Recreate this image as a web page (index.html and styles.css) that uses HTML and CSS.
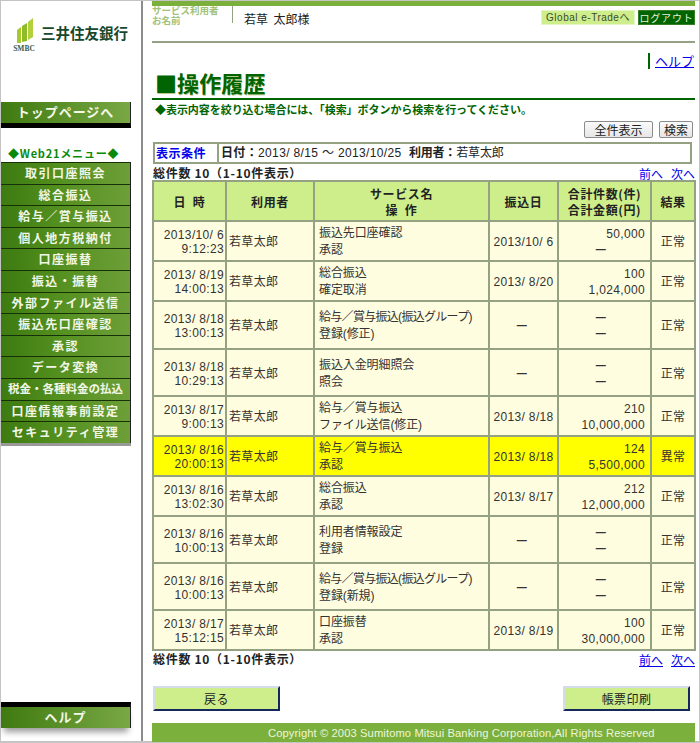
FILE: index.html
```html
<!DOCTYPE html>
<html lang="ja">
<head>
<meta charset="utf-8">
<title>操作履歴</title>
<link rel="stylesheet" href="styles.css">
</head>
<body>
<div class="frame">
  <aside class="side">
    <div class="logo">
      <div class="mark">
        <svg class="mark-svg" width="18" height="25" viewBox="0 0 18 25">
          <polygon points="1,12 5,9 5,25 1,25" fill="#a6c92e"/>
          <polygon points="6,8 11,5 11,23 6,24" fill="#8ebb28"/>
          <polygon points="12,4 17,0 17,19 12,22" fill="#b2d03a"/>
        </svg>
        <span class="smbc">SMBC</span>
      </div>
      <span class="bank">三井住友銀行</span>
    </div>
    <a class="top-btn">トップページへ</a>
    <div class="menu-title">◆Web21メニュー◆</div>
    <nav class="menu">
      <a>取引口座照会</a>
      <a>総合振込</a>
      <a>給与／賞与振込</a>
      <a>個人地方税納付</a>
      <a>口座振替</a>
      <a>振込・振替</a>
      <a>外部ファイル送信</a>
      <a>振込先口座確認</a>
      <a>承認</a>
      <a>データ変換</a>
      <a class="tight">税金・各種料金の払込</a>
      <a>口座情報事前設定</a>
      <a>セキュリティ管理</a>
    </nav>
    <div class="side-space"></div>
    <a class="help-btn">ヘルプ</a>
  </aside>
  <main class="main">
    <header class="head">
      <div class="who"><span>サービス利用者</span><span>お名前</span></div>
      <div class="name">若草&nbsp; 太郎様</div>
      <div class="head-btns"><a class="global">Global e-Tradeへ</a><a class="logout">ログアウト</a></div>
    </header>
    <div class="help-row"><a class="help-link">ヘルプ</a></div>
    <h1 class="title">■操作履歴</h1>
    <p class="note">◆表示内容を絞り込む場合には、「検索」ボタンから検索を行ってください。</p>
    <div class="tools"><button class="gray wide">全件表示</button><button class="gray">検索</button></div>
    <div class="cond">
      <div class="cond-label">表示条件</div>
      <div class="cond-body"><b>日付：</b>2013/ 8/15 ～ 2013/10/25 &nbsp;<b class="cond-user">利用者：</b><span class="cond-name">若草太郎</span></div>
    </div>
    <div class="count-row"><b>総件数 10（1-10件表示）</b><span class="pager"><a>前へ</a><a>次へ</a></span></div>
    <table class="log">
      <colgroup><col class="c1"><col class="c2"><col class="c3"><col class="c4"><col class="c5"><col class="c6"></colgroup>
      <thead>
        <tr><th>日 &nbsp;時</th><th>利用者</th><th>サービス名<br>操 &nbsp;作</th><th>振込日</th><th>合計件数(件)<br>合計金額(円)</th><th>結果</th></tr>
      </thead>
      <tbody>
        <tr class="h40"><td class="r date">2013/10/ 6<br>9:12:23</td><td class="u">若草太郎</td><td class="svc">振込先口座確認<br>承認</td><td class="c">2013/10/ 6</td><td class="r amt">50,000<span class="dash">—</span></td><td class="c">正常</td></tr>
        <tr class="h40"><td class="r date">2013/ 8/19<br>14:00:13</td><td class="u">若草太郎</td><td class="svc">総合振込<br>確定取消</td><td class="c">2013/ 8/20</td><td class="r amt">100<br>1,024,000</td><td class="c">正常</td></tr>
        <tr class="h48"><td class="r date">2013/ 8/18<br>13:00:13</td><td class="u">若草太郎</td><td class="svc"><span class="kana">給与／賞与振込(振込グループ)</span><br>登録(修正)</td><td class="c"><span class="dash">—</span></td><td class="r amt"><span class="dash">—</span><span class="dash">—</span></td><td class="c">正常</td></tr>
        <tr class="h47"><td class="r date">2013/ 8/18<br>10:29:13</td><td class="u">若草太郎</td><td class="svc">振込入金明細照会<br>照会</td><td class="c"><span class="dash">—</span></td><td class="r amt"><span class="dash">—</span><span class="dash">—</span></td><td class="c">正常</td></tr>
        <tr class="h40"><td class="r date">2013/ 8/17<br>9:00:13</td><td class="u">若草太郎</td><td class="svc">給与／賞与振込<br>ファイル送信(修正)</td><td class="c">2013/ 8/18</td><td class="r amt">210<br>10,000,000</td><td class="c">正常</td></tr>
        <tr class="h40 alert"><td class="r date">2013/ 8/16<br>20:00:13</td><td class="u">若草太郎</td><td class="svc">給与／賞与振込<br>承認</td><td class="c">2013/ 8/18</td><td class="r amt">124<br>5,500,000</td><td class="c">異常</td></tr>
        <tr class="h40"><td class="r date">2013/ 8/16<br>13:02:30</td><td class="u">若草太郎</td><td class="svc">総合振込<br>承認</td><td class="c">2013/ 8/17</td><td class="r amt">212<br>12,000,000</td><td class="c">正常</td></tr>
        <tr class="h47"><td class="r date">2013/ 8/16<br>10:00:13</td><td class="u">若草太郎</td><td class="svc">利用者情報設定<br>登録</td><td class="c"><span class="dash">—</span></td><td class="r amt"><span class="dash">—</span><span class="dash">—</span></td><td class="c">正常</td></tr>
        <tr class="h47"><td class="r date">2013/ 8/16<br>10:00:13</td><td class="u">若草太郎</td><td class="svc"><span class="kana">給与／賞与振込(振込グループ)</span><br>登録(新規)</td><td class="c"><span class="dash">—</span></td><td class="r amt"><span class="dash">—</span><span class="dash">—</span></td><td class="c">正常</td></tr>
        <tr class="h40"><td class="r date">2013/ 8/17<br>15:12:15</td><td class="u">若草太郎</td><td class="svc">口座振替<br>承認</td><td class="c">2013/ 8/19</td><td class="r amt">100<br>30,000,000</td><td class="c">正常</td></tr>
      </tbody>
    </table>
    <div class="count-row low"><b>総件数 10（1-10件表示）</b><span class="pager"><a>前へ</a><a>次へ</a></span></div>
    <div class="actions"><button class="green">戻る</button><button class="green">帳票印刷</button></div>
    <footer class="foot">Copyright © 2003 Sumitomo Mitsui Banking Corporation,All Rights Reserved</footer>
  </main>
</div>
</body>
</html>
```
FILE: styles.css
```css
* { box-sizing: border-box; }
html, body { margin: 0; height: 743px; overflow: hidden; background: #fff; }
body { font-family: "Liberation Sans", "Noto Sans CJK JP", sans-serif; font-size: 12px; color: #222; }
.frame { width: 700px; height: 743px; display: flex; border-top: 1px solid #c4c4c4; border-left: 1px solid #c4c4c4; border-right: 1px solid #c4c4c4; border-bottom: 2px solid #c4c4c4; }

.side { width: 142px; flex: none; height: 100%; display: flex; flex-direction: column; border-right: 2px solid #8c8c8c; }
.logo { height: 101px; padding: 17px 0 0 12px; display: flex; align-items: flex-start; gap: 6px; }
.mark { width: 22px; display: flex; flex-direction: column; align-items: center; }
.mark-svg { display: block; margin-left: 2px; }
.smbc { font: bold 7.5px/8px "Liberation Serif", serif; color: #3c5a46; margin-top: 2px; white-space: nowrap; }
.bank { font: bold 14.5px "Noto Sans CJK JP", sans-serif; color: #17472c; margin-top: 4px; white-space: nowrap; }
.top-btn { width: 130px; height: 26px; flex: none; color: #f4f8e8; font: bold 13px/20px "Noto Sans CJK JP", sans-serif; letter-spacing: 1px; text-align: center; background: linear-gradient(90deg, #3f7a10, #79a844); border-right: 1px solid #222; border-bottom: 5px solid #000; }
.menu-title { height: 17px; margin-top: 17px; padding-left: 7px; color: #0a8a0a; font: bold 11px/17px "Noto Sans CJK JP", sans-serif; letter-spacing: .8px; white-space: nowrap; }
.menu { display: flex; flex-direction: column; width: 130px; border-bottom: 3px solid #999; }
.menu a { height: 21.6px; flex: none; color: #f2f6e6; font: bold 12px/19px "Noto Sans CJK JP", sans-serif; letter-spacing: 1.5px; text-align: center; white-space: nowrap; background: linear-gradient(90deg, #3d7a10, #54901f 45%, #6d9f38 100%); border-top: 1px solid #16300a; border-right: 1px solid #222; }
.menu a.tight { font-size: 11.5px; letter-spacing: 0; }
.side-space { flex: 1; }
.help-btn { width: 130px; height: 26px; flex: none; margin-bottom: 13px; color: #f4f8e8; font: bold 13px/20px "Noto Sans CJK JP", sans-serif; letter-spacing: 1px; text-align: center; background: linear-gradient(90deg, #3f7a10, #79a844); border-top: 5px solid #000; border-right: 1px solid #222; box-shadow: 0 7px 6px -3px #9a9a9a; }

.main { width: 543px; flex: none; margin-left: 9px; display: flex; flex-direction: column; height: 100%; }
.head { height: 42px; flex: none; display: flex; border-top: 5px solid #7cb03c; border-bottom: 2px solid #94a283; }
.who { width: 81px; height: 17px; display: flex; flex-direction: column; font: bold 9.5px/10px "Liberation Sans", "Noto Sans CJK JP", sans-serif; color: #a2c27a; border-right: 1px solid #94a283; white-space: nowrap; }
.name { margin-left: 11px; font: 12px/26px "Noto Sans CJK JP", sans-serif; color: #222; }
.head-btns { margin-left: auto; display: flex; gap: 3px; margin-top: 4px; height: 15px; }
.global { width: 94px; background: #cdee8b; border: 1px solid #e6f5c6; color: #3c4a30; font: 10px/13px "Liberation Sans", "Noto Sans CJK JP", sans-serif; letter-spacing: .5px; text-align: center; white-space: nowrap; }
.logout { width: 57px; background: #006400; color: #e8f2dc; border: 1px solid #3c7d28; font: 10px/13px "Noto Sans CJK JP", sans-serif; letter-spacing: .8px; text-align: center; }
.help-row { height: 16px; margin-top: 10px; display: flex; justify-content: flex-end; flex: none; }
.help-link { color: #0000ee; border-left: 2px solid #006400; padding-left: 5px; font: 13px/15px "Noto Sans CJK JP", sans-serif; text-decoration: underline; width: 47px; height: 16px; white-space: nowrap; }
.title { margin: 1px 0 0 3px; height: 24px; flex: none; font: bold 22px/24px "Noto Sans CJK JP", sans-serif; letter-spacing: .1px; color: #006400; text-shadow: .5px .5px 0 #b9c98a; }
.note { margin: 4px 0 0; padding: 2px 0 0 3px; height: 23px; flex: none; border-top: 2px solid #006400; font: bold 11px/14px "Noto Sans CJK JP", sans-serif; letter-spacing: -.05px; color: #006400; white-space: nowrap; }
.tools { display: flex; justify-content: flex-end; gap: 6px; padding-right: 2px; height: 17px; flex: none; }
.gray { width: 34px; height: 17px; padding: 0; background: linear-gradient(#fafafa, #e6e6e6); border: 1px solid #8c8c8c; border-radius: 2px; font: 12px/14px "Noto Sans CJK JP", sans-serif; color: #222; }
.gray.wide { width: 69px; }
.cond { display: flex; margin-top: 4px; margin-left: 1px; height: 22px; width: 539px; flex: none; border: 2px solid #94a283; }
.cond-label { width: 64px; border-right: 2px solid #94a283; color: #0000ee; font: bold 12px/18px "Noto Sans CJK JP", sans-serif; letter-spacing: .5px; padding-left: 1px; }
.cond-body { padding-left: 2px; font: 12px/18px "Liberation Sans", "Noto Sans CJK JP", sans-serif; white-space: nowrap; letter-spacing: .35px; }
.cond-user { letter-spacing: -.2px; }
.cond-name { letter-spacing: -.1px; }
.count-row { display: flex; justify-content: space-between; margin: 1px 0 0 1px; height: 15px; width: 542px; flex: none; font: 12px/16px "Noto Sans CJK JP", sans-serif; }
.count-row b { color: #222; letter-spacing: .7px; }
.pager { display: flex; gap: 8px; padding-top: 1px; }
.pager a { color: #0000ee; text-decoration: underline; }
.count-row.low { margin-top: 0; height: 17px; }

.log { width: 542px; margin-left: 0; border-collapse: collapse; table-layout: fixed; flex: none; border: 2px solid #94a283; background: #fffde0; }
.log th, .log td { border: 2px solid #94a283; padding: 2px 1px 0; font-size: 12px; line-height: 16px; font-family: "Liberation Sans", "Noto Sans CJK JP", sans-serif; letter-spacing: .35px; color: #333; }
.log th { background: #cdee8b; height: 40px; font-weight: bold; letter-spacing: .6px; text-align: center; font-family: "Noto Sans CJK JP", sans-serif; color: #222; }
.c1 { width: 73px; } .c2 { width: 88px; } .c3 { width: 175px; } .c4 { width: 69px; } .c5 { width: 93px; } .c6 { width: 44px; }
.h40 td { height: 40px; }
.h47 td { height: 47px; }
.h48 td { height: 48px; }
.log .u { padding-left: 2px; }
.log .svc { padding-left: 4px; white-space: nowrap; letter-spacing: -.1px; line-height: 17px; }
.log .r { text-align: right; }
.log .date { line-height: 14px; }
.log .amt { padding-right: 5px; }
.log .c { text-align: center; }
.kana { letter-spacing: -.7px; }
.dash { display: block; text-align: center; font-size: 10px; font-weight: bold; padding-right: 3px; }
.alert td { background: #ffff00; }

.actions { display: flex; justify-content: space-between; width: 537px; margin: 18px 0 0 1px; flex: none; }
.green { width: 127px; height: 25px; padding: 0; background: #cdee8b; border: 2px solid; border-color: #d4dcea #14285a #14285a #d4dcea; font: 12px/20px "Noto Sans CJK JP", sans-serif; color: #222; letter-spacing: .4px; }
.foot { margin-top: 12px; height: 19px; flex: none; background: #7cb03c; color: #eef5dd; font: 11.2px/17px "Liberation Sans", sans-serif; text-align: left; padding: 2px 0 0 116px; white-space: nowrap; letter-spacing: .1px; }
```
